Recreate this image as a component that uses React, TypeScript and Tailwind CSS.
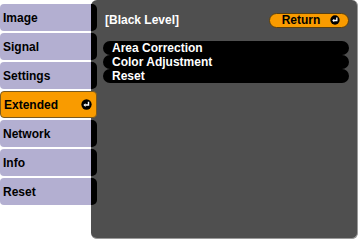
import React from "react";

const tabs = ["Image", "Signal", "Settings", "Extended", "Network", "Info", "Reset"];
const items = ["Area Correction", "Color Adjustment", "Reset"];

const ReturnIcon = ({ size = 11 }: { size?: number }) => (
  <svg width={size} height={size} viewBox="0 0 12 12">
    <circle cx="6" cy="6" r="5.6" fill="#000" />
    <path d="M8.2 3 V6.6 H4.6" stroke="#fff" strokeWidth="1.6" fill="none" />
    <path d="M2.6 6.6 L5 4.5 V8.7 Z" fill="#fff" />
  </svg>
);

const App = () => {
  return (
    <div
      className="w-[360px] h-[241px] bg-white flex overflow-hidden"
      style={{ fontFamily: '"Liberation Sans", Arial, sans-serif' }}
    >
      <div className="relative z-10 w-[97px] shrink-0 pt-[4px] flex flex-col gap-[2px]">
        {tabs.map((t) =>
          t === "Extended" ? (
            <div
              key={t}
              className="h-[27px] w-[97px] flex items-center justify-between pl-[3px] pr-[4px] bg-[#f99b00] rounded-[4px] border border-[#7a5a20]"
            >
              <span className="text-[12px] font-bold text-black">{t}</span>
              <ReturnIcon />
            </div>
          ) : (
            <div key={t} className="h-[27px] flex">
              <div className="w-[91px] h-full flex items-center pl-[3px] bg-[#b3afd1] rounded-l-[4px]">
                <span className="text-[12px] font-bold text-black">{t}</span>
              </div>
              <div className="w-[6px] h-full bg-black rounded-r-[5px]" />
            </div>
          )
        )}
      </div>
      <div className="-ml-[6px] mr-[2px] h-[239px] flex-1 bg-[#4f4f4f] rounded-[6px] border-r border-b border-[#9a9a9a] pl-[14px] pr-[8px] pt-[12px]">
        <div className="flex items-center justify-between h-[16px]">
          <span className="text-[12px] font-bold text-white">[Black Level]</span>
          <div className="w-[80px] h-[15px] rounded-full bg-[#f99b00] border border-[#5a4010] flex items-center justify-center gap-[10px] pl-[4px]">
            <span className="text-[12px] font-bold text-black leading-none">Return</span>
            <ReturnIcon size={10} />
          </div>
        </div>
        <div className="mt-[13px] -ml-[2px] flex flex-col">
          {items.map((it) => (
            <div key={it} className="h-[14px] bg-black rounded-full flex items-center pl-[9px]">
              <span className="text-[12px] font-bold text-white leading-none">{it}</span>
            </div>
          ))}
        </div>
      </div>
    </div>
  );
};

export default App;
